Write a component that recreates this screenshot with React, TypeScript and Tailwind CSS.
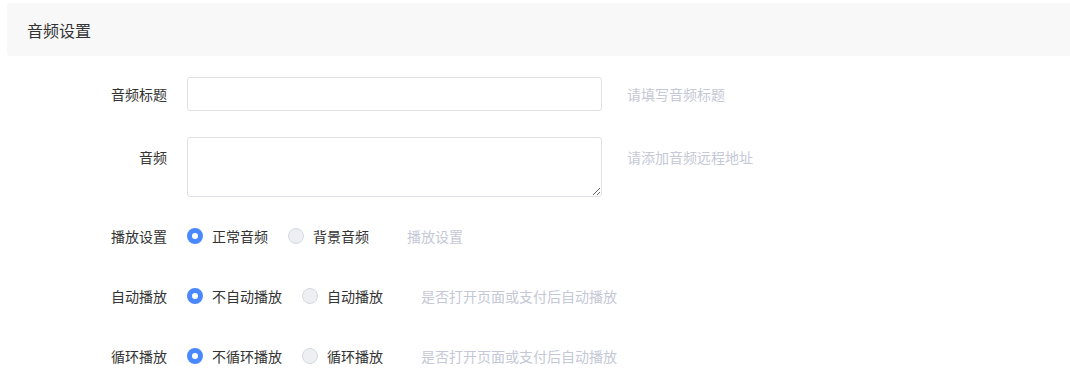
import { useState } from 'react';

const font = { fontFamily: '"Noto Sans CJK SC", "Noto Sans", sans-serif' };

interface RadioOption {
  value: string;
  label: string;
}

function Radio({ checked, label, onClick }: { checked: boolean; label: string; onClick: () => void }) {
  return (
    <label className="flex items-center cursor-pointer" onClick={onClick}>
      {checked ? (
        <span className="w-4 h-4 rounded-full border-[5px] border-[#4a88ff] bg-white box-border" />
      ) : (
        <span className="w-4 h-4 rounded-full border border-[#d6d9e2] bg-[#eeeff3] box-border" />
      )}
      <span className="ml-[9px] text-[14px] text-[#333]">{label}</span>
    </label>
  );
}

function RadioRow({
  label,
  options,
  tip,
  initial,
}: {
  label: string;
  options: RadioOption[];
  tip: string;
  initial: string;
}) {
  const [value, setValue] = useState(initial);
  return (
    <div className="flex items-center h-[20px]">
      <div className="w-[167px] text-right text-[14px] text-[#333]">{label}</div>
      <div className="ml-5 flex items-center gap-5">
        {options.map((o) => (
          <Radio key={o.value} checked={value === o.value} label={o.label} onClick={() => setValue(o.value)} />
        ))}
      </div>
      <div className="ml-[38px] text-[14px] text-[#c5c8d6]">{tip}</div>
    </div>
  );
}

export default function App() {
  return (
    <div className="w-[1070px] h-[388px] bg-white overflow-hidden pt-[3px] pl-[7px]" style={font}>
      {/* Section header */}
      <div className="h-[53px] bg-[#f8f8f8] rounded-l-[4px] flex items-center pl-5">
        <span className="text-[16px] text-[#333]">音频设置</span>
      </div>

      <div className="-ml-[7px]">
        {/* Title */}
        <div className="flex items-center mt-[21px]">
          <div className="w-[167px] text-right text-[14px] text-[#333]">音频标题</div>
          <input
            type="text"
            className="ml-5 w-[415px] h-[34px] border border-[#dfe1e6] rounded-[3px] px-2 text-[14px] outline-none"
          />
          <div className="ml-[25px] text-[14px] text-[#c5c8d6]">请填写音频标题</div>
        </div>

        {/* Audio url */}
        <div className="flex items-start mt-[26px]">
          <div className="w-[167px] text-right text-[14px] text-[#333] pt-[10px]">音频</div>
          <textarea className="ml-5 w-[415px] h-[60px] border border-[#dfe1e6] rounded-[3px] px-2 py-1 text-[14px] outline-none block" />
          <div className="ml-[25px] text-[14px] text-[#c5c8d6] pt-[10px]">请添加音频远程地址</div>
        </div>

        <div className="mt-[29px] flex flex-col gap-10">
          <RadioRow
            label="播放设置"
            initial="normal"
            tip="播放设置"
            options={[
              { value: 'normal', label: '正常音频' },
              { value: 'bg', label: '背景音频' },
            ]}
          />
          <RadioRow
            label="自动播放"
            initial="no"
            tip="是否打开页面或支付后自动播放"
            options={[
              { value: 'no', label: '不自动播放' },
              { value: 'yes', label: '自动播放' },
            ]}
          />
          <RadioRow
            label="循环播放"
            initial="no"
            tip="是否打开页面或支付后自动播放"
            options={[
              { value: 'no', label: '不循环播放' },
              { value: 'yes', label: '循环播放' },
            ]}
          />
        </div>
      </div>
    </div>
  );
}
